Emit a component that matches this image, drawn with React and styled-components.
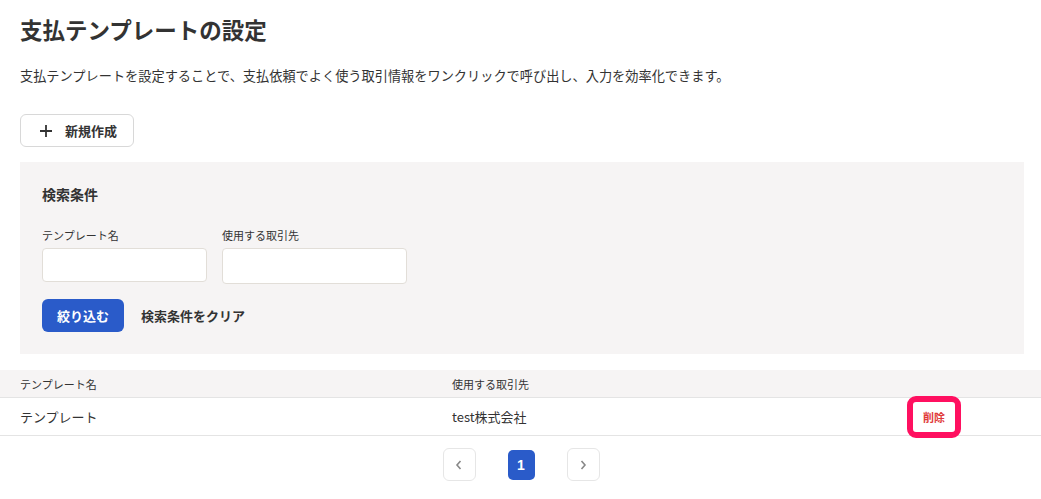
import styled, { createGlobalStyle } from 'styled-components';

const Global = createGlobalStyle`
  body {
    margin: 0;
    background: #fff;
    font-family: "Noto Sans CJK JP", "Noto Sans", sans-serif;
    color: #333;
  }
  * { box-sizing: border-box; }
`;

export default function App() {
  return (
    <>
      <Global />
      <Page>
        <Title>支払テンプレートの設定</Title>
        <Lead>支払テンプレートを設定することで、支払依頼でよく使う取引情報をワンクリックで呼び出し、入力を効率化できます。</Lead>
        <NewButton>
          <svg width="14" height="14" viewBox="0 0 14 14">
            <path d="M7 1v12M1 7h12" stroke="#333" strokeWidth="1.8" />
          </svg>
          新規作成
        </NewButton>
        <SearchPanel>
          <PanelTitle>検索条件</PanelTitle>
          <Fields>
            <Field>
              <Label>テンプレート名</Label>
              <Input $w={165} $h={34} />
            </Field>
            <Field>
              <Label>使用する取引先</Label>
              <Input $w={185} $h={36} />
            </Field>
          </Fields>
          <Actions>
            <PrimaryButton>絞り込む</PrimaryButton>
            <TextButton>検索条件をクリア</TextButton>
          </Actions>
        </SearchPanel>
        <Table>
          <HeadRow>
            <Cell $w={432}>テンプレート名</Cell>
            <Cell>使用する取引先</Cell>
          </HeadRow>
          <BodyRow>
            <Cell $w={432}>テンプレート</Cell>
            <Cell $grow>test株式会社</Cell>
            <DeleteButton>削除</DeleteButton>
          </BodyRow>
        </Table>
        <Pager>
          <PageButton>
            <svg width="10" height="12" viewBox="0 0 10 12">
              <path d="M6.5 2 3 6l3.5 4" fill="none" stroke="#888" strokeWidth="1.6" />
            </svg>
          </PageButton>
          <PageNumber>1</PageNumber>
          <PageButton>
            <svg width="10" height="12" viewBox="0 0 10 12">
              <path d="M3.5 2 7 6l-3.5 4" fill="none" stroke="#888" strokeWidth="1.6" />
            </svg>
          </PageButton>
        </Pager>
      </Page>
    </>
  );
}

const Page = styled.div`
  padding: 12px 17px 0 20px;
`;

const Title = styled.h1`
  margin: 0;
  font-size: 22.5px;
  line-height: 34px;
  font-weight: 700;
  color: #333;
`;

const Lead = styled.p`
  margin: 20px 0 0;
  font-size: 13.2px;
  line-height: 20px;
  color: #333;
`;

const NewButton = styled.button`
  margin-top: 28px;
  width: 114px;
  height: 33px;
  display: flex;
  align-items: center;
  justify-content: center;
  gap: 12px;
  padding: 0 0 0 2px;
  background: #fff;
  border: 1px solid #d8d8d8;
  border-radius: 6px;
  font-family: inherit;
  font-size: 13px;
  font-weight: 700;
  color: #333;
`;

const SearchPanel = styled.section`
  margin-top: 15px;
  background: #f6f4f4;
  padding: 20px 22px 22px;
  height: 192px;
`;

const PanelTitle = styled.h2`
  margin: 0;
  font-size: 14px;
  line-height: 24px;
  font-weight: 700;
  color: #333;
`;

const Fields = styled.div`
  display: flex;
  gap: 15px;
  margin-top: 21px;
`;

const Field = styled.div`
  display: flex;
  flex-direction: column;
  gap: 5px;
`;

const Label = styled.label`
  font-size: 11px;
  line-height: 16px;
  color: #333;
`;

const Input = styled.input`
  width: ${p => p.$w}px;
  height: ${p => p.$h}px;
  border: 1px solid #e2ded8;
  border-radius: 4px;
  background: #fff;
`;

const Actions = styled.div`
  display: flex;
  align-items: center;
  gap: 17px;
  margin-top: 15px;
`;

const PrimaryButton = styled.button`
  width: 82px;
  height: 33px;
  border: none;
  border-radius: 6px;
  background: #2a5bc9;
  color: #fff;
  font-family: inherit;
  font-size: 13px;
  font-weight: 700;
`;

const TextButton = styled.button`
  border: none;
  background: none;
  padding: 0;
  font-family: inherit;
  font-size: 13px;
  font-weight: 700;
  color: #333;
`;

const Table = styled.div`
  margin: 16px -17px 0 -20px;
`;

const HeadRow = styled.div`
  display: flex;
  align-items: center;
  height: 28px;
  padding: 0 20px;
  background: #f6f4f4;
  border-bottom: 1px solid #e4e4e4;
  font-size: 11px;
  color: #333;
`;

const BodyRow = styled.div`
  display: flex;
  align-items: center;
  height: 38px;
  padding: 0 20px;
  border-bottom: 1px solid #e4e4e4;
  font-size: 13px;
  color: #333;
`;

const Cell = styled.div`
  width: ${p => (p.$w ? `${p.$w}px` : 'auto')};
  flex: ${p => (p.$grow ? 1 : 'none')};
`;

const DeleteButton = styled.button`
  margin-right: 60px;
  width: 54px;
  height: 42px;
  border: 6px solid #ff1060;
  border-radius: 9px;
  background: #fff;
  color: #e03a3a;
  font-family: inherit;
  font-size: 11px;
  font-weight: 700;
`;

const Pager = styled.div`
  display: flex;
  justify-content: center;
  align-items: center;
  gap: 32px;
  margin-top: 12px;
  padding-right: 2px;
`;

const PageButton = styled.button`
  width: 33px;
  height: 33px;
  display: flex;
  align-items: center;
  justify-content: center;
  background: #fff;
  border: 1px solid #e6e6e6;
  border-radius: 6px;
`;

const PageNumber = styled.span`
  width: 27px;
  height: 30px;
  display: flex;
  align-items: center;
  justify-content: center;
  border-radius: 5px;
  background: #2a5bc9;
  color: #fff;
  font-family: "Liberation Sans", sans-serif;
  font-size: 14px;
  font-weight: 700;
`;
